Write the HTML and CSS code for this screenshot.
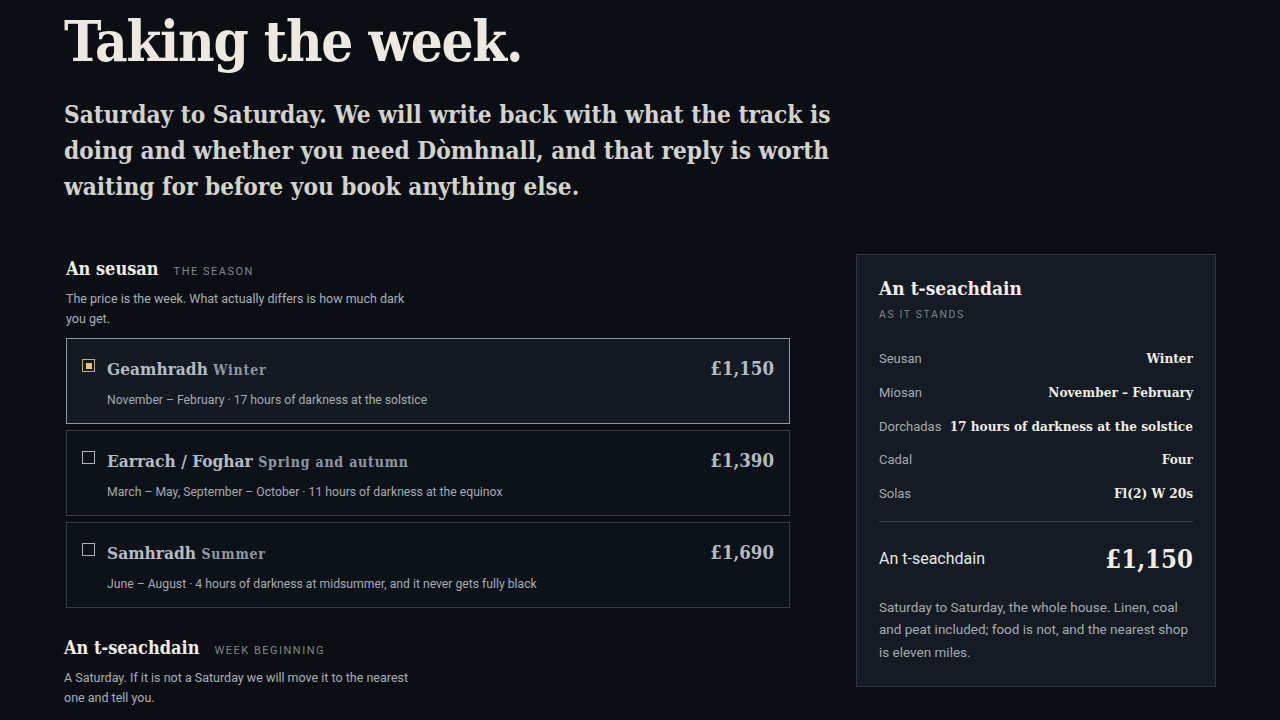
FILE: index.html
```html
<!DOCTYPE html>
<html>
<head>
<link rel="stylesheet" href="styles.css">
</head>
<body>

<div class="page">
  <h1 class="page-title">Taking the week.</h1>
  <p class="page-lede">Saturday to Saturday. We will write back with what the track is doing and whether you need Dòmhnall, and that reply is worth waiting for before you book anything else.</p>

  <div class="layout">
    <div class="form-column">

      <div class="section section-season">
        <div class="section-head">
          <h2 class="section-title">An seusan</h2>
          <span class="section-tag">The season</span>
        </div>
        <p class="section-note">The price is the week. What actually differs is how much dark you get.</p>

        <div class="season-list">
          <label class="season-card selected">
            <span class="check"><span class="check-dot"></span></span>
            <span class="season-body">
              <span class="season-name">Geamhradh <span class="season-en">Winter</span></span>
              <span class="season-desc">November – February · 17 hours of darkness at the solstice</span>
            </span>
            <span class="season-price">£1,150</span>
          </label>

          <label class="season-card">
            <span class="check"></span>
            <span class="season-body">
              <span class="season-name">Earrach / Foghar <span class="season-en">Spring and autumn</span></span>
              <span class="season-desc">March – May, September – October · 11 hours of darkness at the equinox</span>
            </span>
            <span class="season-price">£1,390</span>
          </label>

          <label class="season-card">
            <span class="check"></span>
            <span class="season-body">
              <span class="season-name">Samhradh <span class="season-en">Summer</span></span>
              <span class="season-desc">June – August · 4 hours of darkness at midsummer, and it never gets fully black</span>
            </span>
            <span class="season-price">£1,690</span>
          </label>
        </div>
      </div>

      <div class="section section-week">
        <div class="section-head">
          <h2 class="section-title">An t-seachdain</h2>
          <span class="section-tag">Week beginning</span>
        </div>
        <p class="section-note">A Saturday. If it is not a Saturday we will move it to the nearest one and tell you.</p>
      </div>

    </div>

    <div class="summary">
      <h3 class="summary-title">An t-seachdain</h3>
      <div class="summary-tag">As it stands</div>

      <div class="summary-rows">
        <div class="summary-row"><span class="summary-label">Seusan</span><span class="summary-value">Winter</span></div>
        <div class="summary-row"><span class="summary-label">Miosan</span><span class="summary-value">November – February</span></div>
        <div class="summary-row"><span class="summary-label">Dorchadas</span><span class="summary-value">17 hours of darkness at the solstice</span></div>
        <div class="summary-row"><span class="summary-label">Cadal</span><span class="summary-value">Four</span></div>
        <div class="summary-row"><span class="summary-label">Solas</span><span class="summary-value">Fl(2) W 20s</span></div>
      </div>

      <div class="summary-total">
        <span class="total-label">An t-seachdain</span>
        <span class="total-price">£1,150</span>
      </div>

      <p class="summary-note">Saturday to Saturday, the whole house. Linen, coal and peat included; food is not, and the nearest shop is eleven miles.</p>
    </div>
  </div>
</div>

</body>
</html>
```

FILE: styles.css
```css
body {
  background-color: #0b0f14;
  color: #c9cdd1;
  font-family: Roboto, "Liberation Sans", sans-serif;
  margin: 0;
}

.page {
  padding: 6px 64px 0 64px;
}

.page-title {
  color: #ece9e1;
  font-family: "DejaVu Serif", serif;
  font-size: 56px;
  font-stretch: condensed;
  font-weight: bold;
  letter-spacing: -1.2px;
  line-height: 70px;
  margin: 0;
}

.page-lede {
  color: #d2d2ce;
  font-family: "DejaVu Serif", serif;
  font-size: 24.2px;
  font-stretch: condensed;
  font-weight: bold;
  line-height: 36px;
  margin: 21px 0 0 0;
  max-width: 800px;
}

.layout {
  display: grid;
  gap: 66px;
  grid-template-columns: 1fr 360px;
  margin-top: 49px;
}

.form-column {
  padding-top: 3px;
}

.section-season {
  padding-left: 2px;
}

.section-week {
  margin-top: 28px;
}

.section-head {
  align-items: baseline;
  display: flex;
  gap: 15px;
}

.section-title {
  color: #f1eee7;
  font-family: "DejaVu Serif", serif;
  font-size: 18px;
  font-stretch: condensed;
  font-weight: bold;
  line-height: 24px;
  margin: 0;
}

.section-tag {
  color: #7f868e;
  font-size: 11px;
  letter-spacing: 1.5px;
  text-transform: uppercase;
}

.section-note {
  color: #a8afb6;
  font-size: 12.5px;
  line-height: 20px;
  margin: 8px 0 0 0;
  max-width: 345px;
}

.season-list {
  display: flex;
  flex-direction: column;
  gap: 6px;
  margin-top: 9px;
}

.season-card {
  align-items: flex-start;
  background-color: #0d1218;
  border: 1px solid #363e47;
  display: flex;
  padding: 17px 15px 14px 15px;
}

.season-card.selected {
  background-color: #131a21;
  border-color: #8a949e;
}

.check {
  align-items: center;
  border: 1px solid #aab2ba;
  box-sizing: border-box;
  display: flex;
  flex-shrink: 0;
  height: 13px;
  justify-content: center;
  margin: 3px 12px 0 0;
  width: 13px;
}

.selected .check {
  border-color: #c9aa62;
}

.check-dot {
  background-color: #e6c676;
  height: 6px;
  width: 6px;
}

.season-body {
  display: flex;
  flex: 1;
  flex-direction: column;
  gap: 8px;
}

.season-name {
  color: #b3bcc5;
  font-family: "DejaVu Serif", serif;
  font-size: 17.2px;
  font-stretch: condensed;
  font-weight: bold;
  line-height: 26px;
}

.season-en {
  color: #8e98a2;
  font-size: 14px;
  letter-spacing: 0.8px;
}

.season-desc {
  color: #a3abb3;
  font-size: 12.2px;
  line-height: 18px;
}

.season-price {
  color: #b3bcc5;
  font-family: "DejaVu Serif", serif;
  font-size: 18.5px;
  font-stretch: condensed;
  font-weight: bold;
  line-height: 26px;
}

.summary {
  align-self: start;
  background-color: #141b22;
  border: 1px solid #2f3741;
  padding: 20px 22px 23px 22px;
}

.summary-title {
  color: #f1eee7;
  font-family: "DejaVu Serif", serif;
  font-size: 19px;
  font-stretch: condensed;
  font-weight: bold;
  line-height: 26px;
  margin: 0;
}

.summary-tag {
  color: #7b838c;
  font-size: 10.5px;
  letter-spacing: 1.6px;
  margin-top: 7px;
  text-transform: uppercase;
}

.summary-rows {
  display: flex;
  flex-direction: column;
  margin-top: 21px;
  padding-bottom: 10px;
}

.summary-row {
  align-items: baseline;
  display: flex;
  gap: 8px;
  justify-content: space-between;
  line-height: 33.75px;
}

.summary-label {
  color: #a3abb3;
  font-size: 13px;
  white-space: nowrap;
}

.summary-value {
  color: #eeebe4;
  font-family: "DejaVu Serif", serif;
  font-size: 13.5px;
  font-stretch: condensed;
  font-weight: bold;
  white-space: nowrap;
}

.summary-total {
  align-items: center;
  border-top: 1px solid #353d46;
  display: flex;
  justify-content: space-between;
  padding-top: 22px;
}

.total-label {
  color: #e4e6e8;
  font-size: 16px;
}

.total-price {
  color: #efece5;
  font-family: "DejaVu Serif", serif;
  font-size: 25.5px;
  font-stretch: condensed;
  font-weight: bold;
}

.summary-note {
  color: #a3abb3;
  font-size: 13.5px;
  line-height: 22.5px;
  margin: 22px 0 0 0;
}
```
